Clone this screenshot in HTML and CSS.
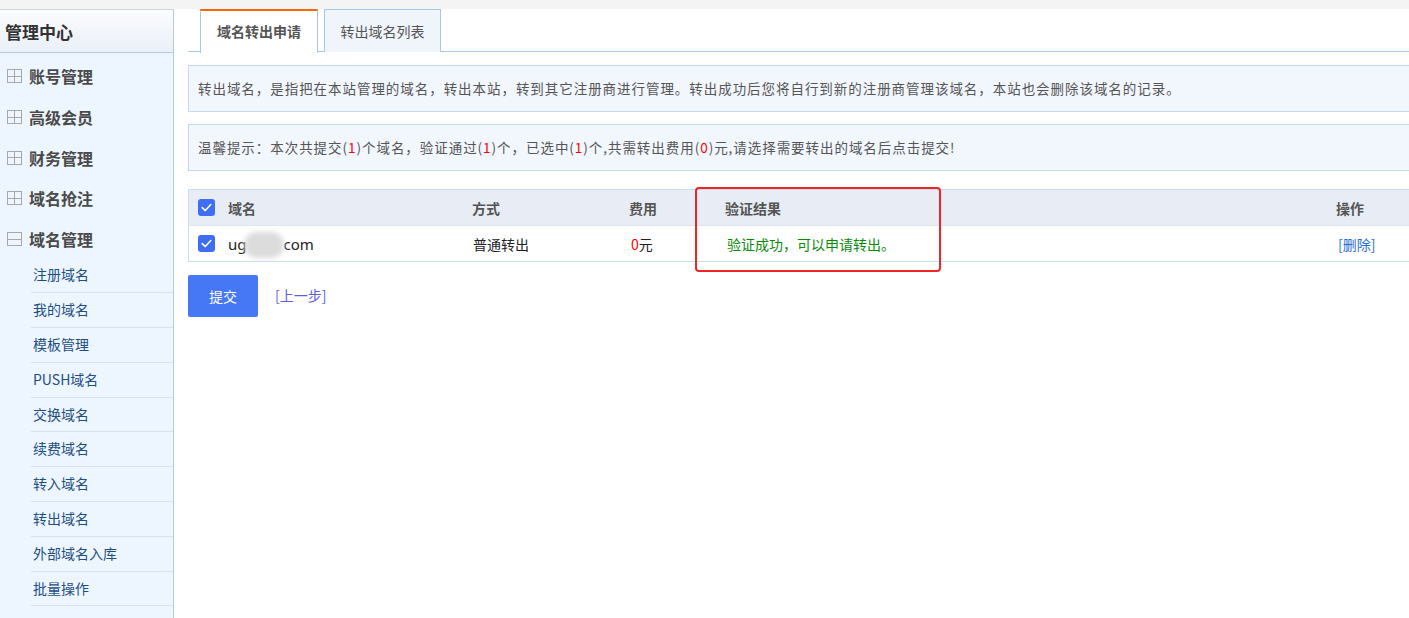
FILE: index.html
```html
<!DOCTYPE html>
<html lang="zh-CN">
<head>
<meta charset="utf-8">
<title>域名转出申请</title>
<link rel="stylesheet" href="styles.css">
</head>
<body>
<div class="topstrip"></div>
<div class="page">
  <aside class="sidebar">
    <div class="side-head">管理中心</div>
    <ul class="menu">
      <li class="menu-item"><span class="ico plus"></span>账号管理</li>
      <li class="menu-item"><span class="ico plus"></span>高级会员</li>
      <li class="menu-item"><span class="ico plus"></span>财务管理</li>
      <li class="menu-item"><span class="ico plus"></span>域名抢注</li>
      <li class="menu-item"><span class="ico minus"></span>域名管理</li>
    </ul>
    <ul class="submenu">
      <li>注册域名</li>
      <li>我的域名</li>
      <li>模板管理</li>
      <li>PUSH域名</li>
      <li>交换域名</li>
      <li>续费域名</li>
      <li>转入域名</li>
      <li>转出域名</li>
      <li>外部域名入库</li>
      <li>批量操作</li>
    </ul>
  </aside>
  <main class="main">
    <div class="tabs">
      <div class="tab active">域名转出申请</div>
      <div class="tab">转出域名列表</div>
    </div>
    <div class="info">转出域名，是指把在本站管理的域名，转出本站，转到其它注册商进行管理。转出成功后您将自行到新的注册商管理该域名，本站也会删除该域名的记录。</div>
    <div class="info">温馨提示：本次共提交(<span class="red">1</span>)个域名，验证通过(<span class="red">1</span>)个，已选中(<span class="red">1</span>)个,共需转出费用(<span class="red">0</span>)元,请选择需要转出的域名后点击提交!</div>
    <div class="table-wrap">
      <div class="trow thead">
        <div class="cell c-check"><span class="cb"><svg viewBox="0 0 17 17" width="17" height="17"><path d="M4.2 8.6 L7.3 11.6 L12.8 5.6" fill="none" stroke="#fff" stroke-width="1.5" stroke-linecap="round" stroke-linejoin="round"/></svg></span></div>
        <div class="cell c-name">域名</div>
        <div class="cell c-way">方式</div>
        <div class="cell c-fee">费用</div>
        <div class="cell c-res">验证结果</div>
        <div class="cell c-op">操作</div>
      </div>
      <div class="trow tbody">
        <div class="cell c-check"><span class="cb"><svg viewBox="0 0 17 17" width="17" height="17"><path d="M4.2 8.6 L7.3 11.6 L12.8 5.6" fill="none" stroke="#fff" stroke-width="1.5" stroke-linecap="round" stroke-linejoin="round"/></svg></span></div>
        <div class="cell c-name domain">ug<span class="blur"></span>com</div>
        <div class="cell c-way">普通转出</div>
        <div class="cell c-fee"><span class="red">0</span>元</div>
        <div class="cell c-res green">验证成功，可以申请转出。</div>
        <div class="cell c-op"><a class="del">[删除]</a></div>
      </div>
      <div class="highlight"></div>
    </div>
    <div class="actions">
      <button class="btn">提交</button>
      <a class="prev">[上一步]</a>
    </div>
  </main>
</div>
</body>
</html>
```

FILE: styles.css
```css
* { box-sizing: border-box; }
html, body {
  margin: 0;
  padding: 0;
  background: #fff;
  font-family: "Noto Sans CJK SC", "Microsoft YaHei", sans-serif;
  color: #555;
  overflow: hidden;
  width: 1409px;
  height: 618px;
}
ul { list-style: none; margin: 0; padding: 0; }

.topstrip {
  height: 9px;
  background: #f4f4f4;
}
.page {
  display: flex;
  width: 1600px;
  height: 609px;
}

/* sidebar */
.sidebar {
  width: 174px;
  flex: none;
  background: #edf6fe;
  border-right: 1px solid #b7cbe0;
  border-top: 1px solid #c9d8e8;
}
.side-head {
  height: 43px;
  line-height: 43px;
  padding-left: 5px;
  font-size: 17px;
  font-weight: bold;
  color: #333;
  background: linear-gradient(#fbfcfe, #eaf0f8);
  border-bottom: 1px solid #b7cbe0;
}
.menu { padding-top: 4px; }
.menu-item {
  height: 40.7px;
  display: flex;
  align-items: center;
  padding-left: 7px;
  padding-bottom: 2px;
  font-size: 16px;
  font-weight: bold;
  color: #4a4a4a;
}
.ico {
  width: 15px;
  height: 14px;
  border: 1px solid #a8a8a8;
  margin-right: 7px;
  background:
    linear-gradient(#a8a8a8, #a8a8a8) center / 100% 1px no-repeat;
}
.ico.plus {
  background:
    linear-gradient(#a8a8a8, #a8a8a8) center / 100% 1px no-repeat,
    linear-gradient(#a8a8a8, #a8a8a8) center / 1px 100% no-repeat;
}
.submenu {
  margin-left: 31px;
  margin-top: -2px;
}
.submenu li {
  height: 34.8px;
  line-height: 32px;
  padding-left: 2px;
  font-size: 14px;
  color: #1f4f82;
  border-bottom: 1px solid #d6e3ee;
}

/* main */
.main {
  flex: none;
  width: 1420px;
  padding-left: 14px;
}
.tabs {
  display: flex;
  height: 43px;
  border-bottom: 1px solid #a9c8e6;
  padding-left: 12px;
  gap: 6px;
}
.tab {
  width: 117px;
  height: 43px;
  line-height: 42px;
  text-align: center;
  font-size: 14px;
  color: #555;
  border: 1px solid #a9c8e6;
  border-bottom: none;
  background: #f0f4fb;
}
.tab.active {
  width: 118px;
  height: 44px;
  background: #fff;
  border-top: 2px solid #ff6600;
  font-weight: bold;
  line-height: 40px;
}
.info {
  margin-top: 13px;
  height: 47px;
  line-height: 45px;
  padding-left: 9px;
  background: #f2f6fd;
  border: 1px solid #c3d9ee;
  font-size: 13.5px;
  letter-spacing: 0.95px;
  color: #555;
  white-space: nowrap;
}
.info + .info { margin-top: 12px; }
.red { color: #f00; }
.green { color: #0a8a0a; }

.table-wrap {
  position: relative;
  margin-top: 18px;
  border-top: 1px solid #c8dcef;
  border-bottom: 1px solid #c8dcef;
  border-left: 1px solid #c8dcef;
}
.trow {
  display: flex;
  align-items: center;
}
.thead {
  height: 36px;
  background: #e8edf5;
  font-size: 14px;
  font-weight: bold;
  color: #555;
  border-bottom: 1px solid #dde5ef;
}
.tbody {
  height: 35px;
  background: #fff;
  font-size: 14px;
  color: #222;
}
.cell { flex: none; }
.c-check { width: 39px; padding-left: 9px; display: flex; align-items: center; }
.c-name { width: 244px; }
.c-way { width: 157px; }
.c-fee { width: 96px; }
.c-res { width: 611px; }
.tbody .c-res { padding-left: 2px; }
.tbody .c-fee { padding-left: 2px; }
.tbody .c-way { padding-left: 1px; }
.c-op { width: 120px; }
.tbody .c-op { padding-left: 2px; }
.cb {
  width: 17px;
  height: 17px;
  border-radius: 3px;
  background: #3f6ef4;
  display: block;
}
.cb svg { display: block; }
.domain {
  display: flex;
  align-items: center;
  font-family: "Noto Sans", "Liberation Sans", sans-serif;
  font-size: 15px;
  color: #222;
}
.blur {
  width: 40px;
  height: 26px;
  margin: 2px 0 0 -3px;
  background: #dcdcdc;
  border-radius: 13px;
  filter: blur(2.5px);
}
.del { color: #1f6fd0; }
.highlight {
  position: absolute;
  left: 506px;
  top: -3px;
  width: 246px;
  height: 85px;
  border: 2px solid #ef2525;
  border-radius: 4px;
  pointer-events: none;
}

.actions {
  margin-top: 13px;
  display: flex;
  align-items: center;
  gap: 17px;
}
.btn {
  width: 70px;
  height: 42px;
  border: none;
  border-radius: 2px;
  background: #4677f5;
  color: #fff;
  font-family: inherit;
  font-size: 14px;
  padding: 0;
}
.prev {
  font-size: 14px;
  color: #5b5ed8;
  margin-top: -2px;
}
```
